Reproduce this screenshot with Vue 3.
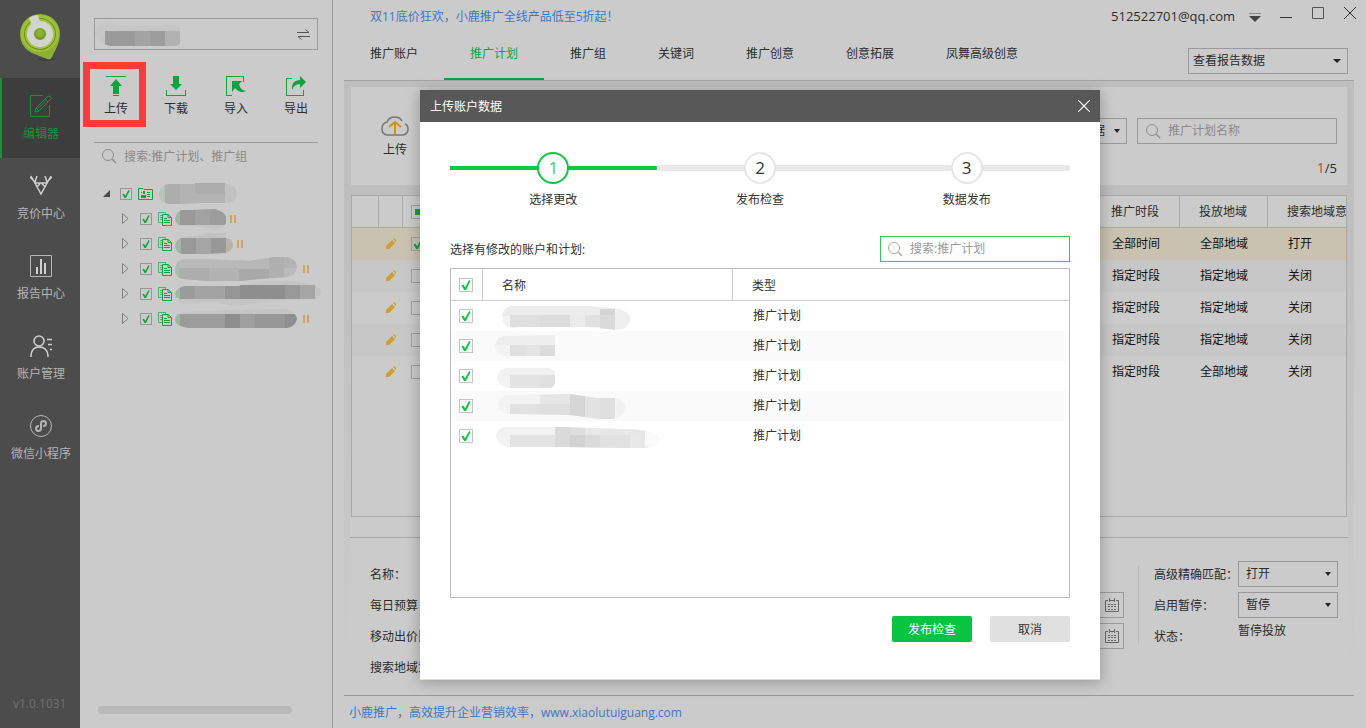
<script setup>
import { ref } from 'vue'

const navItems = [
  { id: 'edit', label: '编辑器' },
  { id: 'bid', label: '竞价中心' },
  { id: 'report', label: '报告中心' },
  { id: 'user', label: '账户管理' },
  { id: 'mini', label: '微信小程序' },
]
const activeNav = ref('edit')

const tabs = ['推广账户', '推广计划', '推广组', '关键词', '推广创意', '创意拓展', '凤舞高级创意']
const activeTab = ref('推广计划')

const actions = [
  { id: 'upload', label: '上传' },
  { id: 'download', label: '下载' },
  { id: 'import', label: '导入' },
  { id: 'export', label: '导出' },
]

// Masked names: an outline, a base tone and mosaic cells given as [x, y, w, h, colour]
const accountMask = {
  box: '0 -1 86 24', w: 86, h: 24, base: '#c6c6c6',
  d: 'M0 9Q2 0 12 0Q24 3 42 3H68Q82 0 85 6V20Q84 23 80 23H16Q0 20 0 9Z',
  cells: [[10, 8, 30, 15, '#9a9a9a'], [40, 8, 15, 15, '#a3a3a3'], [55, 8, 15, 15, '#9d9d9d'], [70, 8, 15, 15, '#b2b2b2']],
}
const rootMask = {
  box: '0 0 78 22', w: 78, h: 22, base: '#c2c2c2',
  d: 'M0 11Q2 1 10 1H36V0H66Q78 2 78 11Q77 20 66 20H42L24 21H10Q1 20 0 11Z',
  cells: [[0, 0, 6, 22, '#b9c2bb'], [6, 0, 15, 22, '#adadad'], [21, 0, 15, 22, '#b3b3b3'], [36, 0, 30, 11, '#adadad'], [36, 11, 30, 11, '#b4b4b4']],
}
const treeRows = [
  { paused: true, mask: { box: '0 0 51 20', w: 51, h: 20, base: '#c4c4c4', d: 'M0 10Q2 1 8 1H16L40 0Q50 3 51 8V14Q48 20 40 20L22 17H8Q1 17 0 10Z',
    cells: [[0, 0, 5, 20, '#9fb8a5'], [5, 0, 15, 16, '#999'], [20, 0, 15, 16, '#a2a2a2'], [35, 0, 16, 16, '#9d9d9d']] } },
  { paused: true, mask: { box: '0 0 58 22', w: 58, h: 22, base: '#c2c2c2', d: 'M0 13Q1 7 6 5L36 0H51V5Q58 6 58 13Q56 20 49 20L32 21H8Q1 20 0 13Z',
    cells: [[0, 5, 6, 17, '#9fb8a5'], [6, 5, 15, 17, '#999'], [21, 5, 15, 17, '#a5a5a5'], [36, 5, 15, 17, '#989898'], [51, 5, 10, 17, '#b7b3ab']] } },
  { paused: true, mask: { box: '0 0 124 24', w: 124, h: 24, base: '#bababa', d: 'M0 14Q1 3 9 2H34L75 4L100 0H112Q121 2 122 10Q121 19 112 20L84 22L66 24H32L9 22Q1 21 0 14Z',
    cells: [[0, 0, 4, 24, '#adbbb0'], [4, 11, 30, 13, '#adadad'], [34, 11, 30, 13, '#b2b2b2'], [64, 2, 30, 10, '#b7b7b7'], [64, 12, 30, 12, '#a8a8a8'], [94, 0, 15, 24, '#afafaf'], [109, 0, 13, 11, '#b3b3b3']] } },
  { paused: false, mask: { box: '0 0 146 26', w: 146, h: 26, base: '#c4c4c4', d: 'M0 13Q2 6 10 5H60L92 0H120L140 4Q146 8 146 13Q143 18 138 18H125L100 20L62 25L35 21L4 23V17Q0 17 0 13Z',
    cells: [[0, 5, 5, 14, '#9fb8a5'], [5, 5, 15, 13, '#9b9b9b'], [20, 5, 30, 13, '#a3a3a3'], [50, 5, 15, 13, '#969696'], [65, 4, 45, 14, '#8e8e8e'], [110, 4, 15, 14, '#999'], [125, 4, 15, 14, '#a5a5a5']] } },
  { paused: true, mask: { box: '0 0 124 20', w: 124, h: 20, base: '#c4c4c4', d: 'M0 11Q1 4 8 3L60 1L112 0Q121 3 122 10Q120 18 112 19H16Q1 18 0 11Z',
    cells: [[0, 5, 5, 14, '#9fb8a5'], [5, 5, 45, 15, '#9c9c9c'], [50, 5, 15, 15, '#8d8d8d'], [65, 5, 15, 15, '#9f9f9f'], [80, 5, 30, 15, '#979797'], [110, 5, 12, 15, '#8f8f8f']] } },
]

const planRows = [
  { time: '全部时间', area: '全部地域', intent: '打开', on: true },
  { time: '指定时段', area: '指定地域', intent: '关闭', on: false },
  { time: '指定时段', area: '指定地域', intent: '关闭', on: false },
  { time: '指定时段', area: '指定地域', intent: '关闭', on: false },
  { time: '指定时段', area: '全部地域', intent: '关闭', on: false },
]

const changes = ref([
  { checked: true, box: '0 -1 165 30', cells: [[7, 4, 120, 10, '#ececec'], [15, 13, 30, 12, '#dfdfdf'], [45, 13, 30, 12, '#dcdcdc'], [75, 13, 15, 12, '#ebebeb'], [90, 13, 15, 12, '#e0e0e0'], [105, 7, 15, 6, '#d4d4d4'], [105, 13, 15, 15, '#dadada'], [120, 7, 16, 20, '#efefef']],
    d: 'M7 15Q8 5 16 4H92L125 7Q135 11 135 17Q134 27 122 28L92 25H30L16 26Q8 24 7 15Z' },
  { checked: true, box: '0 -1 165 30', cells: [[0, 3, 60, 10, '#eee'], [15, 13, 15, 12, '#e0e0e0'], [30, 13, 15, 12, '#e4e4e4'], [45, 13, 15, 12, '#dcdcdc']],
    d: 'M0 14Q1 5 10 4L60 3V24H10Q1 22 0 14Z' },
  { checked: true, box: '0 -2 165 30', cells: [[2, 5, 58, 8, '#f1f1f1'], [15, 12, 30, 14, '#e3e3e3'], [45, 12, 15, 14, '#e0e0e0']],
    d: 'M2 15Q3 6 12 5H54Q60 7 60 10V20Q59 25 54 25H12Q3 23 2 15Z' },
  { checked: true, box: '0 -1 165 30', cells: [[3, 2, 42, 12, '#f2f2f2'], [45, 2, 30, 11, '#e6e6e6'], [15, 12, 30, 12, '#e1e1e1'], [45, 12, 30, 12, '#dfdfdf'], [75, 2, 15, 25, '#d5d5d5'], [90, 4, 15, 24, '#e2e2e2'], [105, 6, 15, 22, '#dfdfdf'], [120, 6, 10, 22, '#f2f2f2']],
    d: 'M3 13Q4 4 13 3L75 2L102 6L120 6Q130 9 130 16Q129 25 118 27H105L75 23L15 22Q4 21 3 13Z' },
  { checked: true, box: '0 -2 165 30', cells: [[1, 4, 59, 10, '#f2f2f2'], [15, 12, 45, 12, '#e3e3e3'], [60, 4, 15, 21, '#dadada'], [75, 4, 15, 8, '#dedede'], [75, 12, 15, 14, '#d2d2d2'], [90, 4, 60, 8, '#e7e7e7'], [90, 12, 15, 14, '#dadada'], [105, 12, 30, 14, '#e1e1e1'], [135, 12, 15, 14, '#e8e8e8'], [150, 4, 15, 20, '#fafafa']],
    d: 'M1 13Q2 4 12 4H70L125 6Q160 6 165 15Q164 24 150 25H125L68 24H12Q2 22 1 13Z' },
])

const allChecked = ref(true)
const toggleAll = () => changes.value.forEach((c) => { c.checked = allChecked.value })
const steps = ['选择更改', '发布检查', '数据发布']
</script>

<template>
  <div class="app">
    <nav class="nav">
      <div class="logo">
        <svg width="44" height="50" viewBox="0 0 44 50">
          <ellipse cx="28" cy="46" rx="9" ry="2" fill="#434343" />
          <path d="M21 1A20 20 0 0 1 41 21C41 29 37 36 33 44Q32 47 28 46L13 40C5 36 1 29 1 21A20 20 0 0 1 21 1Z" fill="#8fb133" />
          <path d="M21 2A19 19 0 0 1 40 20A19 19 0 0 1 2 20A19 19 0 0 1 21 2Z" fill="#9fc03c" />
          <circle cx="21" cy="21" r="16" fill="#6e8f21" />
          <circle cx="21" cy="21" r="15" fill="#a3c33d" />
          <circle cx="21" cy="21" r="13" fill="#d2d4d0" />
          <path d="M10 5Q14 2 19 2L21 9L14 15Z" fill="#d2d4d0" />
          <circle cx="21" cy="21" r="6" fill="#769a25" />
          <circle cx="21" cy="20" r="4" fill="#8cb02e" />
        </svg>
      </div>
      <button v-for="n in navItems" :key="n.id" class="nav-item" :class="{ active: n.id === activeNav }" @click="activeNav = n.id">
        <svg width="22" height="22" viewBox="0 0 22 22" fill="none" stroke="currentColor">
          <g v-if="n.id === 'edit'">
            <path d="M13 .5H.5V21.500H19.500V10" />
            <path d="M5 17L6 13L17 2Q19 0 21 2Q22 4 20 5L9 16Z M6 13L9 16M15 4L18 7M8 13.500L16 5.500" />
          </g>
          <g v-else-if="n.id === 'bid'" stroke="#d0d0d0" stroke-width="1.500">
            <path d="M1 1L11 19L21 1M0 2L4 6M7 1L5 7M22 2L18 6M15 1L17 7M5 8H17M7 12L10 8.500M15 12L12 8.500" />
          </g>
          <g v-else-if="n.id === 'report'">
            <path d="M.5.5H21.500V21.500H.5Z" />
            <path d="M7 12V19M11 4V19M15 8V19" stroke="#d0d0d0" stroke-width="2" />
          </g>
          <g v-else-if="n.id === 'user'" stroke="#d0d0d0" stroke-width="1.500">
            <circle cx="9" cy="6" r="5" />
            <path d="M1 22V20Q2 12 9 12Q17 12 18 20V22M17 4.500H22M18 9.500H22M20 14.500H22" />
          </g>
          <g v-else>
            <circle cx="11" cy="11" r="10.500" />
            <path d="M9 11Q6 11 6 13.500Q6 16 8.500 16Q11 16 11 13V9Q11 6 13.500 6Q16 6 16 8.500Q16 11 13 11" stroke-width="2" />
          </g>
        </svg>
        <span>{{ n.label }}</span>
      </button>
      <span class="version">v1.0.1031</span>
    </nav>

    <aside class="side">
      <button class="account" aria-label="切换账户">
        <svg :width="accountMask.w" :height="accountMask.h" :viewBox="accountMask.box">
          <clipPath id="m-account"><path :d="accountMask.d" /></clipPath>
          <g clip-path="url(#m-account)">
            <rect width="100%" height="100%" :fill="accountMask.base" />
            <rect v-for="(c, i) in accountMask.cells" :key="i" :x="c[0]" :y="c[1]" :width="c[2]" :height="c[3]" :fill="c[4]" />
          </g>
        </svg>
        <svg width="13" height="11" viewBox="0 0 13 11" fill="none" stroke="#555">
          <path d="M0 3.500H12L8.500.5M13 7.500H1L4.500 10.500" />
        </svg>
      </button>

      <div class="actions">
        <button v-for="a in actions" :key="a.id" class="action">
          <svg width="20" height="20" viewBox="0 0 20 20" fill="#0ea33d">
            <g v-if="a.id === 'upload'">
              <path d="M0 0H20V1H0ZM10 3L16 10H13V18H7V10H4ZM7 19H13V20H7Z" />
            </g>
            <g v-else-if="a.id === 'download'">
              <path d="M7 0H13V8H16L10 14L4 8H7ZM0 14H1V19H19V14H20V20H0Z" />
            </g>
            <g v-else-if="a.id === 'import'">
              <path d="M0 0H18V6H17V1H1V19H6V20H0ZM6 5H16L13 8Q14 14 20 15Q14 18 9 12L6 16Z" />
            </g>
            <g v-else>
              <path d="M0 2H6V3H1V19H17V14H18V20H0ZM14 0L20 6L14 12V8Q8 8 6 14Q5 4 14 4Z" />
            </g>
          </svg>
          <span>{{ a.label }}</span>
          <i v-if="a.id === 'upload'" class="highlight"></i>
        </button>
      </div>

      <label class="side-search">
        <svg width="15" height="15" viewBox="0 0 15 15" fill="none" stroke="#8c8c8c"><circle cx="6" cy="6" r="5.500" /><path d="M10 10L14 14" stroke-width="1.500" /></svg>
        <input type="text" placeholder="搜索:推广计划、推广组" aria-label="搜索推广计划、推广组">
      </label>

      <ul class="tree">
        <li class="root">
          <svg width="8" height="8" viewBox="0 0 8 8"><path d="M7 0V7H0Z" fill="#4a4a4a" /></svg>
          <span class="chk small">
            <input type="checkbox" checked aria-label="选择账户">
            <svg width="8" height="8" viewBox="0 0 10 11"><path d="M0 6L2 5L4 8L8.500 0L10 1L5 11H3Z" fill="#0ea33d" /></svg>
          </span>
          <svg width="15" height="12" viewBox="0 0 15 12">
            <path d="M.5.5H5L6 1.500H14.500V11.500H.5Z" fill="none" stroke="#0ea33d" />
            <path d="M5 3H7V6H5ZM3 7H8V10H3ZM3 4H4V5H3ZM9 4H12V5H9ZM9 6H12V7H9ZM9 8H12V9H9Z" fill="#0ea33d" />
          </svg>
          <svg class="root-mask" :width="rootMask.w" :height="rootMask.h" :viewBox="rootMask.box">
            <clipPath id="m-root"><path :d="rootMask.d" /></clipPath>
            <g clip-path="url(#m-root)">
              <rect width="100%" height="100%" :fill="rootMask.base" />
              <rect v-for="(c, i) in rootMask.cells" :key="i" :x="c[0]" :y="c[1]" :width="c[2]" :height="c[3]" :fill="c[4]" />
            </g>
          </svg>
        </li>
        <li v-for="(r, k) in treeRows" :key="k">
          <svg width="7" height="11" viewBox="0 0 7 11"><path d="M.5.5V10.500L6 5.500Z" fill="none" stroke="#808080" /></svg>
          <span class="chk small">
            <input type="checkbox" checked :aria-label="'选择推广计划 ' + (k + 1)">
            <svg width="8" height="8" viewBox="0 0 10 11"><path d="M0 6L2 5L4 8L8.500 0L10 1L5 11H3Z" fill="#0ea33d" /></svg>
          </span>
          <svg class="doc" width="14" height="14" viewBox="0 0 14 14" fill="none" stroke="#0ea33d">
            <path d="M4 10.500H.5V.5H7.500V2M2 3.500H4M2 5.500H4M2 7.500H4" opacity=".65" />
            <path d="M4.500 2.500H10L13.500 5.500V13.500H4.500ZM10 2.500V5.500H13M6 6.500H9M6 8.500H12M6 10.500H12" />
          </svg>
          <svg :width="r.mask.w" :height="r.mask.h" :viewBox="r.mask.box">
            <clipPath :id="'m-tree-' + k"><path :d="r.mask.d" /></clipPath>
            <g :clip-path="'url(#m-tree-' + k + ')'">
              <rect width="100%" height="100%" :fill="r.mask.base" />
              <rect v-for="(c, i) in r.mask.cells" :key="i" :x="c[0]" :y="c[1]" :width="c[2]" :height="c[3]" :fill="c[4]" />
            </g>
          </svg>
          <svg v-if="r.paused" class="pause" width="6" height="8" viewBox="0 0 6 8"><path d="M0 0H2V8H0ZM4 0H6V8H4Z" fill="#cfa45f" /></svg>
        </li>
      </ul>
      <div class="scrollbar"></div>
    </aside>

    <main class="main">
      <header class="topbar">
        <a href="#" class="notice">双11底价狂欢，小鹿推广全线产品低至5折起！</a>
        <span class="email">512522701@qq.com</span>
        <button class="win menu" aria-label="菜单"><svg width="12" height="9" viewBox="0 0 12 9"><path d="M0 0H12V1H0Z" fill="#888" /><path d="M0 3H12L6 9Z" fill="#444" /></svg></button>
        <button class="win" aria-label="最小化"><svg width="12" height="12" viewBox="0 0 12 12"><path d="M0 10.500H12" stroke="#333" /></svg></button>
        <button class="win" aria-label="最大化"><svg width="12" height="12" viewBox="0 0 12 12"><path d="M.5.5H11.500V11.500H.5Z" fill="none" stroke="#555" /></svg></button>
        <button class="win" aria-label="关闭"><svg width="12" height="12" viewBox="0 0 12 12"><path d="M0 0L12 12M12 0L0 12" stroke="#333" /></svg></button>
      </header>

      <div class="tabs">
        <button v-for="t in tabs" :key="t" class="tab" :class="{ active: t === activeTab }" @click="activeTab = t">{{ t }}</button>
        <span class="select report-select">
          <select aria-label="报告数据"><option>查看报告数据</option></select>
          <svg width="8" height="4" viewBox="0 0 8 4"><path d="M0 0H8L4 4Z" fill="#222" /></svg>
        </span>
      </div>

      <section class="workspace">
        <div class="toolbar">
          <button class="cloud">
            <svg width="28" height="20" viewBox="0 0 28 20" fill="none">
              <path d="M6 19Q1 18 1 13Q1 7 6 6Q8 1 14 1Q19 1 21 5M24 8Q27 9 27 13Q27 18 22 19H6" stroke="#777" stroke-width="1.500" />
              <path d="M14 18V6M8 11L14 6L20 11" stroke="#d0940f" stroke-width="2" />
            </svg>
            <span>上传</span>
          </button>
          <div class="filters">
            <div class="filter-row">
              <span class="select data-select">
                <select aria-label="数据"><option>全部数据</option></select>
                <svg width="6" height="4" viewBox="0 0 6 4"><path d="M0 0H6L3 4Z" fill="#222" /></svg>
              </span>
              <label class="plan-search">
                <svg width="15" height="15" viewBox="0 0 15 15" fill="none" stroke="#8c8c8c"><circle cx="6" cy="6" r="5.500" /><path d="M10 10L14 14" stroke-width="1.500" /></svg>
                <input type="text" placeholder="推广计划名称" aria-label="推广计划名称">
              </label>
            </div>
            <p class="count"><b>1</b>/5</p>
          </div>
        </div>

        <div class="plan-wrap">
          <table class="plans">
            <colgroup><col class="c1"><col class="c2"><col><col class="c4"><col class="c4"><col class="c6"></colgroup>
            <thead>
              <tr>
                <th></th><th></th>
                <th><span class="chk dim"><input type="checkbox" aria-label="全选"><svg width="6" height="6" viewBox="0 0 6 6"><path d="M0 0H6V6H0Z" fill="#0ea33d" /></svg></span></th>
                <th>推广时段</th><th>投放地域</th><th>搜索地域意</th>
              </tr>
            </thead>
            <tbody>
              <tr v-for="(p, i) in planRows" :key="i" :class="{ selected: p.on }">
                <td></td>
                <td><svg width="10" height="11" viewBox="0 0 10 11"><path d="M0 11V8L6 2L9 5L3 11ZM7 1L8 0L10 2V4Z" fill="#d09d2e" /></svg></td>
                <td>
                  <span class="chk dim">
                    <input type="checkbox" :checked="p.on" :aria-label="'选择第' + (i + 1) + '行'">
                    <svg v-if="p.on" width="10" height="10" viewBox="0 0 10 11"><path d="M0 6L2 5L4 8L8.500 0L10 1L5 11H3Z" fill="#0ea33d" /></svg>
                  </span>
                </td>
                <td>{{ p.time }}</td><td>{{ p.area }}</td><td>{{ p.intent }}</td>
              </tr>
            </tbody>
          </table>
        </div>

        <div class="details">
          <div class="labels">
            <span>名称：</span><span>每日预算：</span><span>移动出价比例：</span><span>搜索地域意：</span>
          </div>
          <div class="dates">
            <label v-for="n in 2" :key="n" class="date">
              <input type="text" :aria-label="'日期 ' + n">
              <svg width="14" height="14" viewBox="0 0 14 14" fill="none" stroke="#666"><path d="M3 2.500H.5V13.500H13.500V2.500H11M5 2.500H9M4.500 0V4M9.500 0V4" /><path d="M3 6.500H12M3 8.500H12M3 11.500H12" stroke-dasharray="2 1" /></svg>
            </label>
          </div>
          <div class="settings">
            <div class="labels">
              <label for="match">高级精确匹配：</label><label for="pause">启用暂停：</label><span>状态：</span>
            </div>
            <div class="values">
              <span class="select"><select id="match"><option>打开</option></select><svg width="6" height="4" viewBox="0 0 6 4"><path d="M0 0H6L3 4Z" fill="#222" /></svg></span>
              <span class="select"><select id="pause"><option>暂停</option></select><svg width="6" height="4" viewBox="0 0 6 4"><path d="M0 0H6L3 4Z" fill="#222" /></svg></span>
              <span class="status">暂停投放</span>
            </div>
          </div>
        </div>
      </section>

      <footer class="footer"><a href="#">小鹿推广，高效提升企业营销效率，www.xiaolutuiguang.com</a></footer>
    </main>

    <div class="modal" role="dialog" aria-label="上传账户数据">
      <header class="modal-head">
        <span>上传账户数据</span>
        <button aria-label="关闭窗口"><svg width="12" height="12" viewBox="0 0 12 12"><path d="M0 0L12 12M12 0L0 12" stroke="#fff" stroke-width="1.200" /></svg></button>
      </header>
      <div class="modal-body">
        <ol class="steps">
          <li v-for="(s, i) in steps" :key="s" :class="{ current: i === 0 }">
            <div class="step-line"><b>{{ i + 1 }}</b></div>
            <span>{{ s }}</span>
          </li>
        </ol>
        <div class="pick">
          <span>选择有修改的账户和计划:</span>
          <label class="modal-search">
            <svg width="15" height="15" viewBox="0 0 15 15" fill="none" stroke="#aaa"><circle cx="6" cy="6" r="5.500" /><path d="M10 10L14 14" stroke-width="1.500" /></svg>
            <input type="text" placeholder="搜索:推广计划" aria-label="搜索推广计划">
          </label>
        </div>
        <div class="grid">
          <table>
            <colgroup><col class="g1"><col class="g2"><col></colgroup>
            <thead>
              <tr>
                <th><span class="chk"><input v-model="allChecked" type="checkbox" aria-label="全选计划" @change="toggleAll"><svg v-if="allChecked" width="10" height="10" viewBox="0 0 10 11"><path d="M0 6L2 5L4 8L8.500 0L10 1L5 11H3Z" fill="#0bc842" /></svg></span></th>
                <th>名称</th><th>类型</th>
              </tr>
            </thead>
            <tbody>
              <tr v-for="(c, k) in changes" :key="k">
                <td><span class="chk"><input v-model="c.checked" type="checkbox" :aria-label="'选择计划 ' + (k + 1)"><svg v-if="c.checked" width="10" height="10" viewBox="0 0 10 11"><path d="M0 6L2 5L4 8L8.500 0L10 1L5 11H3Z" fill="#0bc842" /></svg></span></td>
                <td class="masked">
                  <svg width="165" height="30" :viewBox="c.box">
                    <clipPath :id="'m-plan-' + k"><path :d="c.d" /></clipPath>
                    <g :clip-path="'url(#m-plan-' + k + ')'">
                      <rect width="165" height="30" fill="#f3f3f3" />
                      <rect v-for="(b, i) in c.cells" :key="i" :x="b[0]" :y="b[1]" :width="b[2]" :height="b[3]" :fill="b[4]" />
                    </g>
                  </svg>
                </td>
                <td>推广计划</td>
              </tr>
            </tbody>
          </table>
        </div>
        <div class="modal-actions">
          <button class="primary">发布检查</button>
          <button>取消</button>
        </div>
      </div>
    </div>
  </div>
</template>

<style>
body { margin: 0; background: #cbcbcb; }
</style>

<style scoped>
.app {
  position: relative;
  display: flex;
  min-height: 100vh;
  background: #cbcbcb;
  color: #2c2c2c;
  font: 12px/20px "Open Sans", "Noto Sans CJK SC", sans-serif;
}
.app *, .app *::before { box-sizing: border-box; }
button, input, select { font: inherit; color: inherit; background: none; border: 0; border-radius: 0; padding: 0; margin: 0; outline: none; }
button { cursor: pointer; }
svg { display: block; flex: none; }
a { color: #3c78c2; text-decoration: none; }
table { width: 100%; border-collapse: separate; border-spacing: 0; table-layout: fixed; }
th, td { padding: 0; font-weight: 400; text-align: left; white-space: nowrap; overflow: hidden; }
ul, ol, p { list-style: none; margin: 0; padding: 0; }
input::placeholder { color: #8a8a8a; opacity: 1; }

/* navigation */
.nav { display: flex; flex-direction: column; flex: none; width: 80px; background: #4c4c4c; color: #b5b5b5; }
.logo { height: 78px; padding: 13px 0 0 19px; }
.nav-item { display: flex; flex-direction: column; align-items: center; height: 80px; padding: 17px 0 0 2px; gap: 7px; white-space: nowrap; }
.nav-item.active { background: #3d3d3d; color: #1c8f3c; border-left: 2px solid #12963b; padding-left: 0; }
.version { margin-top: auto; padding: 0 0 14px 13px; color: #707070; }

/* sidebar */
.side { display: flex; flex-direction: column; flex: none; width: 253px; padding: 18px 14px 14px; border-right: 1px solid #9b9b9b; }
.account { display: flex; align-items: center; justify-content: space-between; height: 32px; padding: 0 7px 0 0; border: 1px solid #9a9a9a; }
.actions { display: flex; height: 92px; padding-top: 26px; margin: 0 -8px; }
.action { position: relative; display: flex; flex-direction: column; align-items: center; gap: 3px; width: 60px; height: 44px; }
.highlight { position: absolute; left: -3px; top: -14px; width: 63px; height: 65px; border: 7px solid #fb3b37; }
.side-search { display: flex; align-items: center; gap: 7px; height: 28px; padding-left: 8px; border-top: 1px solid #9a9a9a; }
.side-search input { flex: 1; min-width: 0; height: 20px; }
.tree { margin-top: 11px; }
.tree li { display: flex; align-items: center; height: 25px; padding-left: 28px; }
.tree .chk { margin-left: 11px; }
.tree .root { padding-left: 9px; }
.tree .root .chk { margin: 0 6px 0 9px; }
.root-mask { margin-left: 6px; }
.doc { margin: 0 3px 0 6px; }
.pause { margin-left: 4px; }
.scrollbar { width: 194px; height: 8px; margin: auto 0 0 4px; border-radius: 4px; background: #b9b9b9; }

/* tick boxes */
.chk { position: relative; display: grid; place-items: center; flex: none; width: 14px; height: 14px; }
.chk input { appearance: none; grid-area: 1 / 1; width: 14px; height: 14px; border: 1px solid #c3c3c3; background: transparent; }
.chk svg { grid-area: 1 / 1; pointer-events: none; }
.chk.dim input { border-color: #a0a0a0; }
.chk.small, .chk.small input { width: 12px; height: 12px; border-color: #969696; }

/* drop-downs */
.select { position: relative; display: flex; height: 26px; border: 1px solid #9a9a9a; }
.select select { appearance: none; width: 100%; padding: 0 20px 0 7px; }
.select svg { position: absolute; right: 6px; top: 10px; pointer-events: none; }

/* main area */
.main { display: flex; flex-direction: column; flex: 1; min-width: 0; padding-left: 11px; }
.topbar { display: flex; align-items: center; height: 32px; padding: 0 10px 0 26px; }
.notice { margin-right: auto; line-height: 22px; padding-top: 2px; }
.email { font-size: 13px; }
.win { height: 12px; margin: 0 0 6px 20px; }
.win.menu { margin: 2px -1px 0 14px; height: 9px; }
.tabs { display: flex; height: 49px; margin-right: 12px; padding-right: 6px; border-bottom: 1px solid #a3a3a3; }
.tab { height: 48px; padding: 0 26px; line-height: 44px; border-bottom: 2px solid transparent; display: flex; white-space: nowrap; }
.tab.active { color: #0fa33e; border-bottom-color: #0fa33e; }
.report-select { width: 160px; margin: 16px 0 0 auto; }
.report-select select { padding-left: 4px; }
.workspace { display: flex; flex-direction: column; flex: 1; margin-right: 12px; padding: 6px 6px 0; background: linear-gradient(#bebebe 0, #bebebe 120px, #cbcbcb 100%); }
.toolbar { display: flex; justify-content: space-between; height: 98px; margin: 0 1px 10px; padding: 29px 10px 0 30px; background: #cbcbcb; }
.cloud { display: flex; flex-direction: column; gap: 4px; height: 44px; }
.filter-row { display: flex; justify-content: flex-end; gap: 10px; padding-top: 2px; }
.data-select { width: 88px; }
.data-select select { padding-left: 17px; }
.plan-search { display: flex; align-items: center; gap: 7px; width: 200px; height: 26px; padding: 0 8px; border: 1px solid #9a9a9a; }
.plan-search input { flex: 1; min-width: 0; }
.count { margin-top: 14px; text-align: right; font-size: 13px; }
.count b { color: #c0493d; font-weight: 400; font-size: 14px; }
.plan-wrap { flex: 1; margin: 0 1px; border: 1px solid #a9a9a9; overflow: hidden; background: #cbcbcb; }
.c1 { width: 27px; } .c2 { width: 24px; } .c4 { width: 88px; } .c6 { width: 78px; }
.plans th { height: 32px; padding-left: 19px; border-right: 1px solid #a9a9a9; border-bottom: 1px solid #a9a9a9; }
.plans th:last-child { border-right: 0; }
.plans td { height: 32px; padding-left: 20px; color: #111; }
.plans th:nth-child(-n+3), .plans td:nth-child(-n+3) { padding-left: 8px; }
.plans td:nth-child(2) { padding: 0 0 1px 7px; }
.plans tbody tr:nth-child(even) td { background: #c7c7c7; }
.plans tbody tr.selected td { background: #c9c2b1; }
.details { display: flex; height: 160px; padding-top: 20px; background: #cbcbcb; }
.details::before { content: ""; flex: none; width: 100%; height: 1px; margin-right: -100%; background: #a5a5a5; }
.details > .labels { flex: 1; padding-left: 20px; }
.labels { display: flex; flex-direction: column; gap: 11px; padding-top: 28px; white-space: nowrap; }
.dates { display: flex; flex-direction: column; gap: 5px; padding-top: 55px; }
.date { display: flex; align-items: center; width: 120px; height: 26px; padding-right: 4px; border: 1px solid #9a9a9a; }
.date input { flex: 1; min-width: 0; }
.settings { display: flex; align-self: flex-start; height: 78px; margin: 29px 10px 0 14px; padding-left: 15px; border-left: 1px solid #bababa; }
.settings .labels { width: 84px; margin-top: -29px; }
.values { display: flex; flex-direction: column; gap: 5px; width: 100px; margin-top: -5px; }
.values .select { flex: none; }
.status { line-height: 16px; }
.footer { height: 33px; margin: 18px 12px 0 0; padding: 7px 0 0 5px; border-top: 1px solid #999; }

/* dialog */
.modal { position: absolute; left: 420px; top: 90px; width: 680px; color: #333; background: #fff; border-bottom: 1px solid #ddd; box-shadow: 0 2px 14px rgba(0, 0, 0, .28); }
.modal-head { display: flex; align-items: center; justify-content: space-between; height: 32px; padding: 0 10px; color: #fff; background: #585858; }
.modal-head span { padding-top: 2px; }
.modal-head button { height: 12px; }
.modal-body { padding: 30px 30px 37px; }
.steps { display: flex; }
.steps li { flex: 1; display: flex; flex-direction: column; align-items: center; gap: 6px; }
.step-line { display: flex; justify-content: center; align-self: stretch; background: linear-gradient(#e8e8e8, #e8e8e8) center / 100% 6px no-repeat; }
.step-line b { width: 32px; height: 32px; border: 2px solid #e6e6e6; border-radius: 50%; background: #fff; font-size: 17px; font-weight: 400; line-height: 28px; text-align: center; }
.current .step-line { background: linear-gradient(#0bc842, #0bc842) center / 100% 4px no-repeat; }
.current .step-line b { color: #3ccc66; border-color: #0bc842; }
.pick { display: flex; align-items: center; justify-content: space-between; margin-top: 26px; }
.pick > span { padding-top: 2px; }
.modal-search { display: flex; align-items: center; gap: 7px; width: 190px; height: 26px; padding: 0 7px; border: 1px solid #2ec95c; }
.modal-search input { flex: 1; min-width: 0; }
.modal-search input::placeholder { color: #999; }
.grid { min-height: 330px; margin-top: 6px; border: 1px solid #bcbcbc; }
.g1 { width: 32px; } .g2 { width: 250px; }
.grid th { height: 32px; padding: 2px 0 0 19px; border-bottom: 1px solid #ccc; border-right: 1px solid #ccc; }
.grid th:last-child { border-right: 0; }
.grid td { height: 30px; padding-left: 20px; }
.grid th:first-child, .grid td:first-child { padding: 0 0 0 8px; }
.grid td.masked { padding-left: 12px; }
.grid tbody tr:nth-child(even) td { background: #fafafa; }
.modal-actions { display: flex; justify-content: flex-end; gap: 18px; margin-top: 18px; }
.modal-actions button { width: 80px; height: 26px; padding-top: 2px; border-radius: 2px; background: #e0e0e0; }
.modal-actions .primary { color: #fff; background: #08c440; }
</style>
